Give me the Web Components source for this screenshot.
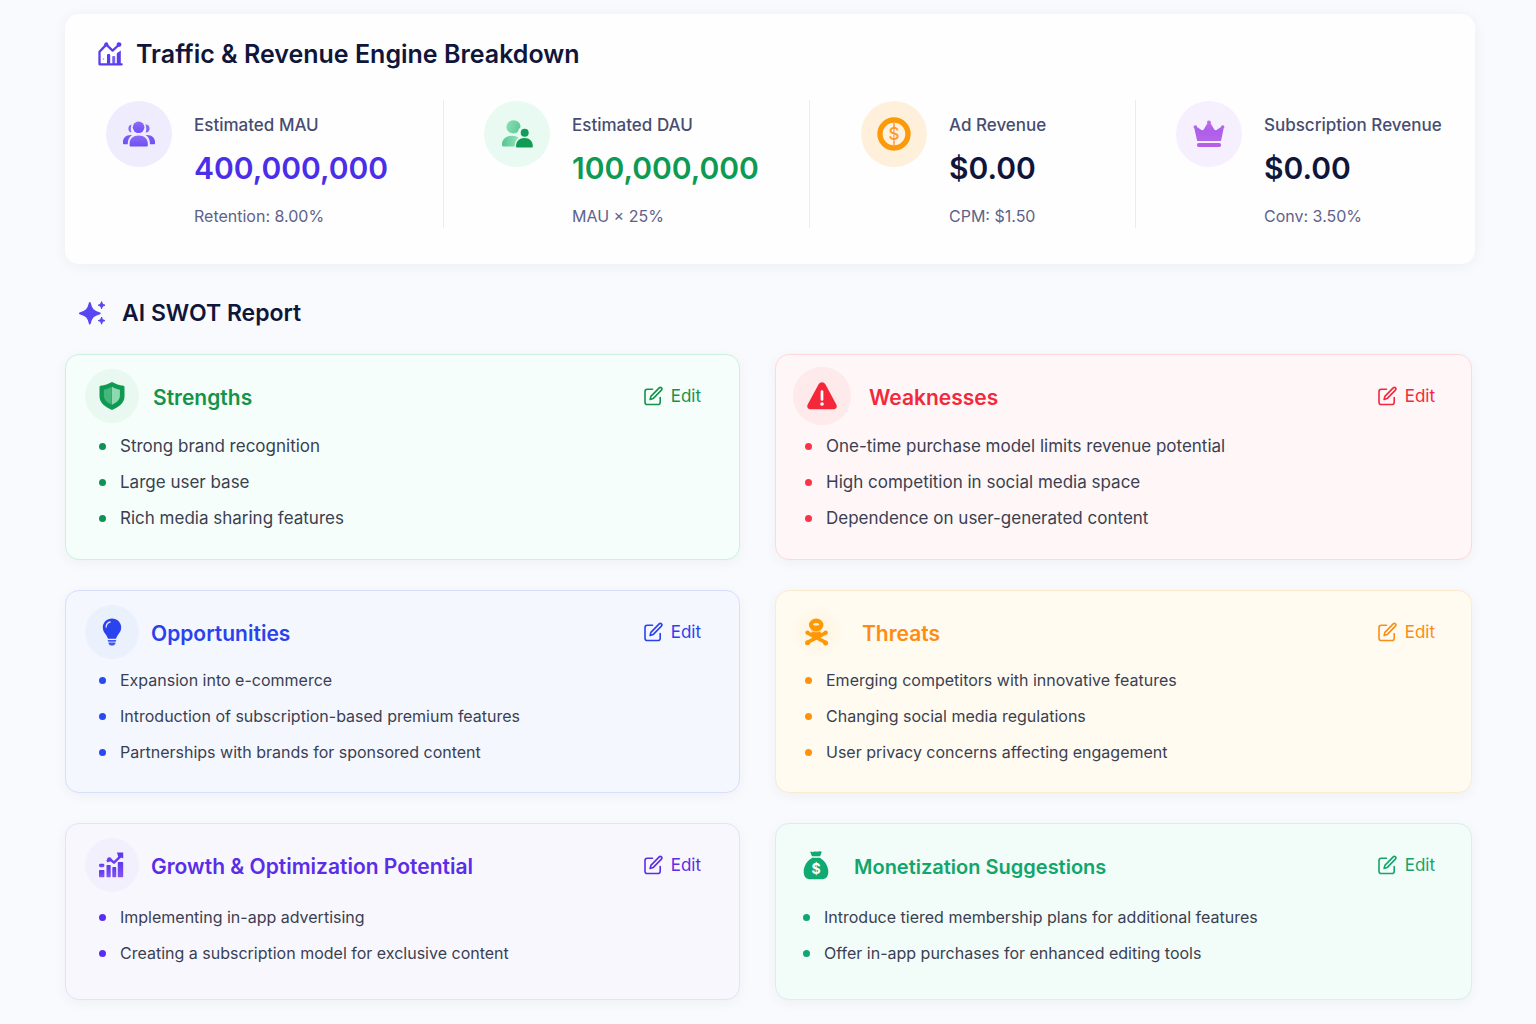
<!DOCTYPE html>
<html lang="en">
<head>
<meta charset="utf-8">
<meta name="viewport" content="width=device-width, initial-scale=1">
<title>Traffic &amp; Revenue Report</title>
<style>
  html { background: #f9fafd; }
  body {
    margin: 0;
    font-family: Inter, "Liberation Sans", sans-serif;
    color: #10163a;
    background: #f9fafd;
  }
</style>
</head>
<body>
<report-page>
  <metrics-panel slot="metrics">
    <span slot="title">Traffic &amp; Revenue Engine Breakdown</span>
    <metric-item icon="users" style="--badge:#efecfe;--value:#4a2ee8;--inset:41px">
      <span slot="label">Estimated MAU</span><span slot="value">400,000,000</span><span slot="note">Retention: 8.00%</span>
    </metric-item>
    <metric-item icon="pair" style="--badge:#e8faf1;--value:#0d9a52">
      <span slot="label">Estimated DAU</span><span slot="value">100,000,000</span><span slot="note">MAU × 25%</span>
    </metric-item>
    <metric-item icon="coin" style="--badge:#fff0dc;--inset:51px">
      <span slot="label">Ad Revenue</span><span slot="value">$0.00</span><span slot="note">CPM: $1.50</span>
    </metric-item>
    <metric-item icon="crown" style="--badge:#f6effe">
      <span slot="label">Subscription Revenue</span><span slot="value">$0.00</span><span slot="note">Conv: 3.50%</span>
    </metric-item>
  </metrics-panel>

  <span slot="heading">AI SWOT Report</span>

  <swot-card icon="shield" style="--accent:#15934b;--dot:#0f9355;--bg:#f5fefa;--line:#cdf1e0;--badge:#e9f8f1;--title-gap:14px;--point:17px">
    <span slot="title">Strengths</span>
    <swot-point>Strong brand recognition</swot-point>
    <swot-point>Large user base</swot-point>
    <swot-point>Rich media sharing features</swot-point>
  </swot-card>
  <swot-card icon="alert" class="right" style="--accent:#f3283c;--dot:#fb3348;--bg:#fef6f7;--line:#fdd9de;--badge:#fee9eb;--badge-size:58px;--badge-inset:17px;--title-gap:18px;--point:17px">
    <span slot="title">Weaknesses</span>
    <swot-point>One-time purchase model limits revenue potential</swot-point>
    <swot-point>High competition in social media space</swot-point>
    <swot-point>Dependence on user-generated content</swot-point>
  </swot-card>
  <swot-card icon="bulb" style="--accent:#2a42ee;--dot:#2b49f0;--bg:#f4f7fe;--line:#d9defc;--badge:#ebf0fd;--list-gap:3px;--foot:23px">
    <span slot="title">Opportunities</span>
    <swot-point>Expansion into e-commerce</swot-point>
    <swot-point>Introduction of subscription-based premium features</swot-point>
    <swot-point>Partnerships with brands for sponsored content</swot-point>
  </swot-card>
  <swot-card icon="skull" class="right" style="--accent:#fd8d12;--dot:#fd930c;--bg:#fffbf1;--line:#fcebcd;--badge:radial-gradient(#fff3dc,#fffbf1 72%);--badge-inset:14px;--title-gap:18px;--list-gap:3px;--foot:23px">
    <span slot="title">Threats</span>
    <swot-point>Emerging competitors with innovative features</swot-point>
    <swot-point>Changing social media regulations</swot-point>
    <swot-point>User privacy concerns affecting engagement</swot-point>
  </swot-card>
  <swot-card icon="growth" style="--accent:#5a2de6;--dot:#5a2eee;--bg:#f8f7fe;--line:#e5e1fb;--badge:#f3f0fd;--list-gap:7px;--foot:29px">
    <span slot="title">Growth &amp; Optimization Potential</span>
    <swot-point>Implementing in-app advertising</swot-point>
    <swot-point>Creating a subscription model for exclusive content</swot-point>
  </swot-card>
  <swot-card icon="bag" class="right" style="--accent:#12a56c;--dot:#10a870;--bg:#f2fcf8;--line:#d2f3e6;--badge:none;--badge-inset:13px;--title-gap:11px;--list-inset:27px;--list-gap:7px;--foot:29px;--title-size:20px">
    <span slot="title">Monetization Suggestions</span>
    <swot-point>Introduce tiered membership plans for additional features</swot-point>
    <swot-point>Offer in-app purchases for enhanced editing tools</swot-point>
  </swot-card>
</report-page>

<script>
const ICONS = {
  chart: [25, 26, `<g fill="none" stroke="#5b3df0" stroke-width="2.300" stroke-linecap="round" stroke-linejoin="round"><path d="M23.700 23.300H1.500V10.800L8.300 3.600l6.300 6L20.700 4"/></g><g fill="#5b3df0"><circle cx="8.300" cy="3.200" r="2"/><circle cx="21" cy="3.600" r="2.400"/><rect x="9" y="13" width="3.200" height="10" rx="1"/><rect x="14.200" y="15" width="3" height="8" rx="1" opacity=".8"/><path d="M18.800 12.200l4-2.600V23h-4z"/><circle cx="5.500" cy="18" r=".8" opacity=".6"/></g>`],
  users: [32, 26, `<defs><linearGradient id="g" x2="0" y2="1"><stop stop-color="#8b6cf9"/><stop offset="1" stop-color="#6f4ff2"/></linearGradient></defs><g fill="url(#g)"><circle cx="15.6" cy="6.3" r="5.8"/><path d="M6.6 22.5v2a.9.9 0 0 0 .9.9h16.4a.9.9 0 0 0 .9-.9v-2c0-4.800-3.700-8-9.100-8s-9.100 3.200-9.100 8z"/><path d="M8.700 3.600a4.100 4.100 0 0 0-.2 8 10 10 0 0 1-.5-6 6 6 0 0 1 .7-2zM22.300 3.400a4.100 4.100 0 1 1 .3 8.200 9 9 0 0 0 .6-5.200 8 8 0 0 0-.9-3zM9 14.100C3.500 13.600 0 16.600 0 21v1.300c0 .6.4 1 1 1h3.700c0-4 1.500-7.200 4.300-9.200zM22.800 14.100c5.600-.5 9.200 2.500 9.200 6.900v1.300c0 .6-.4 1-1 1h-4c0-4-1.300-7.200-4.200-9.200z"/></g>`],
  pair: [31, 28, `<defs><linearGradient id="g" x2="1" y2=".3"><stop stop-color="#8ee0b7"/><stop offset="1" stop-color="#5fcb98"/></linearGradient><linearGradient id="h"><stop stop-color="#55c690"/><stop offset="1" stop-color="#93e2bc"/></linearGradient></defs><path fill="url(#g)" d="M11.400.3a7 6.500 0 0 1 7.200 6.200c0 .7-.4 1.200-1 1.700-1 .9-1.300 2-1.600 3.600A7 6.600 0 0 1 4.400 6.800 7 6.500 0 0 1 11.400.3z"/><path fill="url(#h)" d="M0 24.500c0-5.400 3.800-8.700 9.700-8.700 3 0 5.400.7 7 2-2.400 1.500-3.800 4.300-4.100 8.700H1.600C.6 26.500 0 25.700 0 24.500z"/><circle cx="22.700" cy="12.700" r="4" fill="#119e58"/><path fill="#109b54" d="M14 26.200c0-5 3.500-8.200 8.500-8.200s8.300 3.200 8.300 8.200c0 .8-.4 1.300-1.200 1.300H15.200c-.8 0-1.200-.5-1.200-1.300z"/>`],
  coin: [34, 34, `<circle cx="17" cy="17" r="14" fill="#fff3e0" stroke="#fd9a0b" stroke-width="5.400"/><path stroke="#fb9a2c" stroke-width="1.400" d="M17 6v4M17 24v4"/><text x="17" y="23" text-anchor="middle" font-family="Inter, sans-serif" font-size="17" font-weight="500" fill="#fb9a2c">$</text>`],
  crown: [32, 28, `<defs><linearGradient id="g" x2="0" y2="1"><stop stop-color="#c76be6"/><stop offset=".5" stop-color="#ac5fea"/><stop offset="1" stop-color="#b764e8"/></linearGradient></defs><path fill="url(#g)" d="M16 .5c1 0 1.900.8 1.900 1.700 0 .4-.1.700-.3 1l3.700 6.300c.5.800 1.400 1 2.200.500l4.500-3a1.700 1.700 0 1 1 2.600 1.400L28 21H4.200L1.300 8.300A1.700 1.700 0 1 1 4 7l4.500 3c.8.500 1.700.3 2.200-.5l3.700-6.300a1.700 1.700 0 0 1 1.600-2.700z"/><rect x="4" y="23" width="24" height="4" rx="1.700" fill="#b660e8"/>`],
  sparkle: [28, 26, `<g fill="#5846f2" stroke="#5846f2" stroke-linejoin="round"><path stroke-width="1.800" d="M10.800 3c1.500 6.500 3.500 8.500 10 10.300-6.500 1.800-8.500 3.800-10 10.300-1.500-6.500-3.500-8.500-10-10.300C7.300 11.500 9.300 9.500 10.800 3z"/><path d="M22.600 1.600c.6 2.400 1.100 2.900 3.400 3.600-2.300.7-2.800 1.200-3.400 3.600-.6-2.400-1.100-2.900-3.400-3.600 2.300-.7 2.800-1.200 3.400-3.600zM22.600 17c.6 2.400 1.100 2.900 3.400 3.600-2.300.7-2.800 1.200-3.400 3.600-.6-2.400-1.100-2.900-3.400-3.600 2.300-.7 2.800-1.200 3.400-3.600z"/></g>`],
  shield: [26, 28, `<path fill="#0f9a53" d="M13 0c3.500 2 7.500 3.200 11.400 3.800.7.100 1.100.6 1.100 1.300v9.200c0 6.700-5.500 10.800-12.500 13.700C6 25.100.5 21 .5 14.300V5.100c0-.7.400-1.200 1.100-1.300C5.500 3.200 9.500 2 13 0z"/><path fill="#45b67c" d="M12.700 4.800v17.900C7.500 20.200 4.900 17.700 4.900 13.500V7.700c3-.6 5.500-1.500 7.800-2.900z"/><path fill="#8ed9b0" d="M13 4.800c2.300 1.400 4.900 2.300 7.900 2.900v5.800c0 4.200-2.600 6.700-7.900 9.200z"/>`],
  alert: [30, 28, `<path fill="#f5283b" d="M11.600 2.200a3.900 3.900 0 0 1 6.800 0l10.900 20.300c1.200 2.200 0 4.700-2.500 4.700H3.200c-2.500 0-3.700-2.500-2.500-4.700z"/><path stroke="#fff" stroke-width="2.700" stroke-linecap="round" d="M15 9.600v7.800"/><circle cx="15" cy="22" r="1.800" fill="#fff"/>`],
  bulb: [20, 28, `<path fill="#2a43ef" d="M10 .4c5.200 0 9.200 3.900 9.200 8.900 0 3.200-1.400 5.400-3.100 7.400-1.100 1.300-1.400 2.300-1.700 3.400-.1.400-.4.600-.9.600h-7c-.5 0-.8-.2-.9-.6-.3-1.100-.6-2.100-1.700-3.400C2.200 14.700.8 12.500.8 9.300.8 4.300 4.800.4 10 .4z"/><path fill="none" stroke="#dfe6ff" stroke-width="1.300" stroke-linecap="round" d="M4.100 9c.2-2.700 1.600-4.400 4-5"/><path fill="#4057ee" d="M6.400 22h7.200c.7 0 .9.800.4 1.200l-.7.600H6.700L6 23.200c-.5-.4-.3-1.200.4-1.200zM6.400 24.500h7.200c0 1.900-1.500 3.100-3.600 3.100s-3.600-1.200-3.600-3.100z"/>`],
  skull: [24, 28, `<g fill="#fd9807"><ellipse cx="11.200" cy="7" rx="7.200" ry="6.400"/><path d="M7 13.800h8.400l2 3.200-4 4.200H9L5 17z"/><circle cx="2.500" cy="14.600" r="2.200"/><circle cx="20.700" cy="14.600" r="2.200"/><circle cx="2.500" cy="24.700" r="2.500"/><circle cx="20.600" cy="24.900" r="2.500"/></g><path stroke="#fd9807" stroke-width="3.600" stroke-linecap="round" d="M3 15.200l17 9M20.200 15.200L3 24.200"/><path fill="none" stroke="#ffc46b" stroke-width=".9" stroke-linecap="round" d="M6.500 12.900c3 1.400 6.500 1.400 9.500 0"/><path fill="#fff1d6" d="M8 6.800c.2-1 1.300-1.700 3.200-1.700s3 .7 3.200 1.700l-1.600.8h-3.200z"/>`],
  growth: [26, 26, `<defs><linearGradient id="g" x2="0" y2="1"><stop stop-color="#5b39ee"/><stop offset="1" stop-color="#8556f0"/></linearGradient></defs><g fill="url(#g)"><rect x="0" y="18" width="5.400" height="7.300" rx=".8"/><rect x="7.500" y="13" width="4.200" height="12.300" rx=".8"/><rect x="13.300" y="15" width="3.900" height="10.300" rx=".8"/><rect x="18.800" y="10" width="5.400" height="15.300" rx=".8"/><rect x="0" y="11.800" width="5.400" height="3.400" rx="1.400"/></g><path fill="none" stroke="#6a3ff2" stroke-width="2.500" stroke-linejoin="round" d="M8 9.500l3-2.300 4 3.400 6.200-6"/><circle cx="10.300" cy="7.500" r="2.300" fill="#6a3ff2"/><path fill="#6036ee" d="M18 .6h6.200v6l-2-1-2.500 1z"/>`],
  bag: [26, 29, `<path fill="#11a972" d="M8 .6c1.800.8 3.200-.4 5 0 1.700.3 3-.7 5-.1.700.2.700.8.400 1.400l-1.300 3.300H9L7.600 2C7.300 1.300 7.200.4 8 .6zM9.200 6.800h7.600c4.800 2.700 8.500 8.200 8.500 13.900 0 5-2.500 7.600-6.800 7.600h-11C3.200 28.300.7 25.700.7 20.700c0-5.700 3.700-11.200 8.500-13.900z"/><text x="13" y="22.700" text-anchor="middle" font-family="Inter, sans-serif" font-size="14" font-weight="700" fill="#fff">$</text>`],
  edit: [19, 20, `<g fill="none" stroke="currentColor" stroke-width="1.600" stroke-linecap="round" stroke-linejoin="round"><path d="M8.500 3.300H3.300C1.900 3.300 1 4.200 1 5.600v10.600c0 1.400.9 2.300 2.300 2.300h10.600c1.400 0 2.300-.9 2.300-2.300V11.500"/><path d="M15.200 1.900a1.500 1.500 0 0 1 2.200 2.200l-8.300 8.500-3 .9.800-3.100z"/></g>`]
};

class AppIcon extends HTMLElement {
  constructor() { super(); this.attachShadow({ mode: "open" }); }
  connectedCallback() {
    const [w, h, art] = ICONS[this.getAttribute("name")];
    this.shadowRoot.innerHTML = `
      <style>:host{display:inline-flex;flex:none} svg{display:block}</style>
      <svg width="${w}" height="${h}" viewBox="0 0 ${w} ${h}" aria-hidden="true">${art}</svg>`;
  }
}

class MetricItem extends HTMLElement {
  constructor() { super(); this.attachShadow({ mode: "open" }); }
  connectedCallback() {
    this.shadowRoot.innerHTML = `
      <style>
        :host{display:flex;align-items:flex-start;gap:22px;min-width:0;padding-left:var(--inset,40px);box-sizing:border-box;border-right:1px solid #ebecf2;white-space:nowrap}
        :host(:last-of-type){border-right:0}
        .badge{display:flex;align-items:center;justify-content:center;flex:none;width:66px;height:66px;margin-top:1px;border-radius:50%;background:var(--badge)}
        dl{margin:0;padding-top:13px}
        dt,dd{margin:0}
        dt{font-size:17px;line-height:24px;font-weight:500;color:#474d70}
        .value{margin-top:11px;font-size:30px;line-height:40px;font-weight:600;color:var(--value,#10163a)}
        .note{margin-top:16px;font-size:16px;line-height:24px;color:#5d628a}
      </style>
      <div class="badge"><app-icon name="${this.getAttribute("icon")}"></app-icon></div>
      <dl>
        <dt><slot name="label"></slot></dt>
        <dd class="value"><slot name="value"></slot></dd>
        <dd class="note"><slot name="note"></slot></dd>
      </dl>`;
  }
}

class MetricsPanel extends HTMLElement {
  constructor() { super(); this.attachShadow({ mode: "open" }); }
  connectedCallback() {
    this.shadowRoot.innerHTML = `
      <style>
        :host{display:block;padding:24px 0 36px;border-radius:14px;background:#fefeff;box-shadow:0 2px 14px rgba(40,50,100,.06)}
        h2{display:flex;align-items:center;gap:13px;margin:0 0 30px;padding-left:33px;font-size:25px;line-height:32px;font-weight:600}
        .row{display:grid;grid-template-columns:379fr 366fr 326fr 339fr}
      </style>
      <h2><app-icon name="chart"></app-icon><slot name="title"></slot></h2>
      <div class="row"><slot></slot></div>`;
  }
}

class EditButton extends HTMLElement {
  constructor() { super(); this.attachShadow({ mode: "open" }); }
  connectedCallback() {
    this.shadowRoot.innerHTML = `
      <style>
        :host{display:inline-flex}
        button{display:flex;align-items:center;gap:8px;margin:0;padding:0;border:0;background:none;font:inherit;font-size:17px;line-height:24px;color:inherit;cursor:pointer}
      </style>
      <button type="button"><app-icon name="edit"></app-icon>Edit</button>`;
  }
}

class SwotPoint extends HTMLElement {
  constructor() { super(); this.attachShadow({ mode: "open" }); }
  connectedCallback() {
    this.setAttribute("role", "listitem");
    this.shadowRoot.innerHTML = `
      <style>
        :host{display:flex;align-items:center;gap:14px;font-size:var(--point,16px);line-height:36px;color:#3a3f52}
        i{flex:none;width:7px;height:7px;border-radius:50%;background:var(--dot)}
      </style>
      <i></i><span><slot></slot></span>`;
  }
}

class SwotCard extends HTMLElement {
  constructor() { super(); this.attachShadow({ mode: "open" }); }
  connectedCallback() {
    this.shadowRoot.innerHTML = `
      <style>
        :host{display:block;box-sizing:border-box;padding-bottom:calc(var(--foot,24px) - 1px);border:1px solid var(--line);border-radius:14px;background:var(--bg);box-shadow:0 3px 12px rgba(40,50,100,.05)}
        header{display:flex;align-items:center;height:54px;padding:14px 38px 0 var(--badge-inset,19px);color:var(--accent)}
        .badge{display:flex;align-items:center;justify-content:center;flex:none;width:var(--badge-size,54px);height:var(--badge-size,54px);border-radius:50%;background:var(--badge)}
        h3{flex:1;margin:0 0 0 var(--title-gap,12px);padding-top:3px;font-size:var(--title-size,21px);line-height:28px;font-weight:600}
        .list{margin-top:var(--list-gap,5px);padding-left:var(--list-inset,33px)}
        :host(.right) .list{padding-left:var(--list-inset,29px)}
        :host(.right) header{padding-right:36px}
      </style>
      <header>
        <div class="badge"><app-icon name="${this.getAttribute("icon")}"></app-icon></div>
        <h3><slot name="title"></slot></h3>
        <edit-button></edit-button>
      </header>
      <div class="list" role="list"><slot></slot></div>`;
  }
}

class ReportPage extends HTMLElement {
  constructor() { super(); this.attachShadow({ mode: "open" }); }
  connectedCallback() {
    this.shadowRoot.innerHTML = `
      <style>
        :host{display:block;padding:14px 61px 25px 65px}
        h2{display:flex;align-items:center;gap:15px;margin:33px 0 25px 14px;font-size:23px;line-height:32px;font-weight:600}
        .cards{display:grid;grid-template-columns:675fr 697fr;gap:30px 35px;margin-right:3px}
      </style>
      <main>
        <slot name="metrics"></slot>
        <h2><app-icon name="sparkle"></app-icon><slot name="heading"></slot></h2>
        <div class="cards"><slot></slot></div>
      </main>`;
  }
}

customElements.define("app-icon", AppIcon);
customElements.define("metric-item", MetricItem);
customElements.define("metrics-panel", MetricsPanel);
customElements.define("edit-button", EditButton);
customElements.define("swot-point", SwotPoint);
customElements.define("swot-card", SwotCard);
customElements.define("report-page", ReportPage);
</script>
</body>
</html>
